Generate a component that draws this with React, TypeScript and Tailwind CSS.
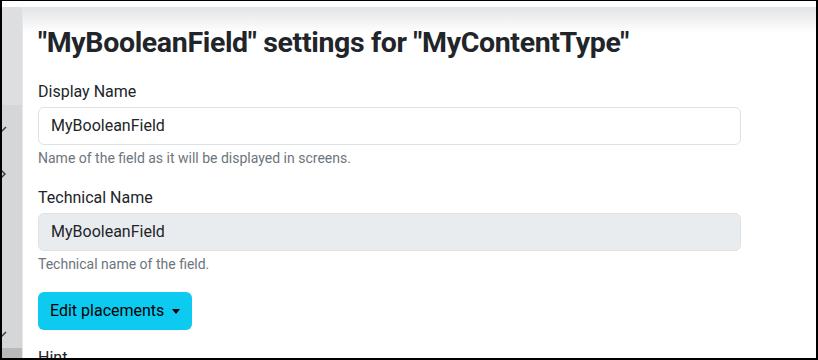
import React from 'react';

const font = { fontFamily: 'Roboto, "Liberation Sans", sans-serif' };

const Chevron: React.FC<{ kind: 'down' | 'right' }> = ({ kind }) => (
  <svg width="8" height="10" viewBox="0 0 8 10" className="-ml-[2px] block">
    {kind === 'down' ? (
      <path d="M0 9 L6 3" stroke="#3a3a3a" strokeWidth="1.4" fill="none" />
    ) : (
      <path d="M1 1 L5 5 L1 9" stroke="#3a3a3a" strokeWidth="1.4" fill="none" />
    )}
  </svg>
);

const Field: React.FC<{ label: string; value: string; help: string; disabled?: boolean }> = ({ label, value, help, disabled }) => (
  <div className="mb-[17px]">
    <label className="block text-[16px] leading-[24px] text-[#212529] mb-[3px]">{label}</label>
    <div
      className={`h-[38px] rounded-[6px] border border-[#dee2e6] px-3 flex items-center text-[16px] text-[#212529] ${
        disabled ? 'bg-[#e9ecef]' : 'bg-white'
      }`}
    >
      {value}
    </div>
    <div className="mt-[3px] text-[14px] leading-[21px] text-[#6c757d]">{help}</div>
  </div>
);

export default function App() {
  return (
    <div
      style={font}
      className="w-[818px] h-[360px] overflow-hidden bg-white border-t border-l-2 border-r-2 border-b-2 border-black flex flex-col"
    >
      <div className="h-[6px] shrink-0 bg-white" />
      <div className="flex flex-1 min-h-0">
        <aside className="w-[21px] shrink-0 flex flex-col border-r border-[#e6e7e9] overflow-hidden">
          <div className="h-[98px] bg-[#dddee0]" />
          <div className="flex-1 bg-[#d5d6d8] flex flex-col">
            <div className="mt-[19px]">
              <Chevron kind="down" />
            </div>
            <div className="mt-[35px]">
              <Chevron kind="right" />
            </div>
            <div className="mt-[150px]">
              <Chevron kind="down" />
            </div>
          </div>
          <div className="h-[10px] bg-[#b9b9ba]" />
        </aside>
        <main className="flex-1 pl-[15px] pr-[75px] pt-[19px] bg-[linear-gradient(to_bottom,#e3e4e6,#ffffff_26px)]">
          <h2 className="text-[28.5px] leading-[34px] font-bold tracking-[-0.35px] text-[#212529] mb-[20px]">
            "MyBooleanField" settings for "MyContentType"
          </h2>
          <Field label="Display Name" value="MyBooleanField" help="Name of the field as it will be displayed in screens." />
          <Field label="Technical Name" value="MyBooleanField" help="Technical name of the field." disabled />
          <button className="h-[38px] px-3 rounded-[6px] bg-[#0dcaf0] text-[16px] text-black flex items-center">
            Edit placements
            <span className="ml-[8px] w-0 h-0 border-t-[5px] border-t-black border-x-[4.5px] border-x-transparent" />
          </button>
          <div className="mt-[16px] text-[16px] leading-[24px] text-[#212529]">Hint</div>
        </main>
      </div>
    </div>
  );
}
